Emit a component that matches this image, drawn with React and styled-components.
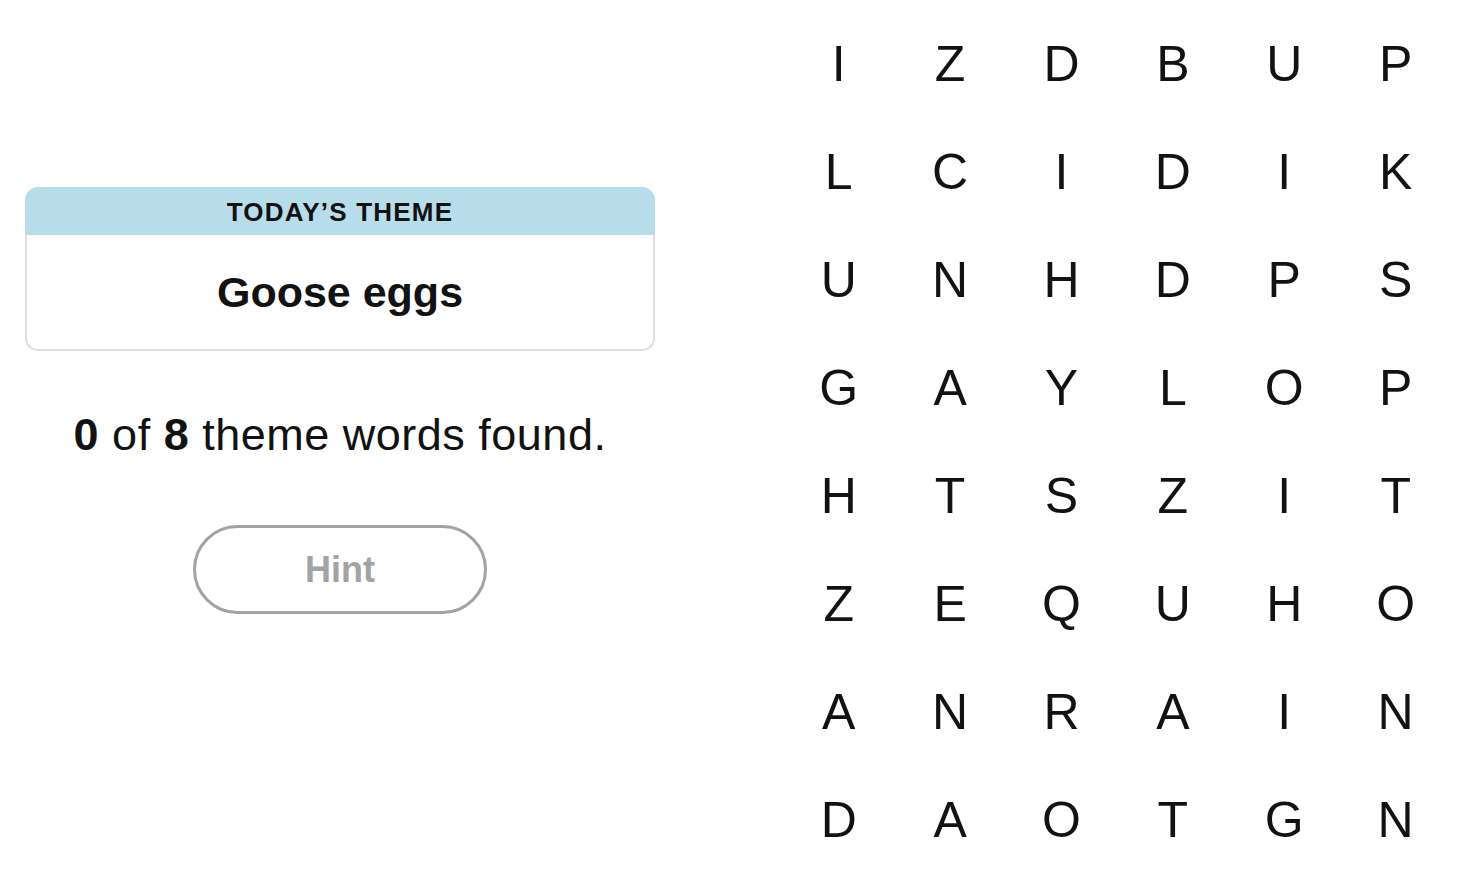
import React from "react";
import styled, { createGlobalStyle } from "styled-components";

const GlobalStyle = createGlobalStyle`
  html, body { margin: 0; padding: 0; background: #ffffff; }
  body { font-family: "Liberation Sans", Arial, sans-serif; color: #121212; }
`;

const Page = styled.div`
  display: flex;
  flex-direction: row;
  align-items: flex-start;
  width: 1474px;
  height: 878px;
  overflow: hidden;
`;

const LeftPanel = styled.section`
  width: 630px;
  margin-left: 25px;
  padding-top: 187px;
  display: flex;
  flex-direction: column;
  align-items: center;
`;

const ThemeCard = styled.div`
  width: 100%;
  display: flex;
  flex-direction: column;
`;

const ThemeHeader = styled.div`
  height: 48px;
  background: #b7ddeb;
  border-radius: 13px 13px 0 0;
  display: flex;
  align-items: center;
  justify-content: center;
  padding-top: 2px;
  box-sizing: border-box;
  font-size: 26px;
  font-weight: 700;
  letter-spacing: 1.2px;
  color: #121212;
  text-transform: uppercase;
`;

const ThemeBody = styled.div`
  height: 114px;
  border: 2px solid #dedede;
  border-top: none;
  border-radius: 0 0 13px 13px;
  display: flex;
  align-items: center;
  justify-content: center;
  font-size: 43px;
  font-weight: 700;
  color: #121212;
`;

const Progress = styled.p`
  margin: 58px 0 0;
  font-size: 45px;
  line-height: 52px;
  letter-spacing: 0.5px;
  color: #121212;
  text-align: center;
  b { font-weight: 700; }
`;

const HintButton = styled.button`
  margin-top: 64px;
  width: 294px;
  height: 89px;
  border: 3px solid #a3a3a3;
  border-radius: 45px;
  background: #ffffff;
  color: #a3a3a3;
  font-family: "Liberation Sans", Arial, sans-serif;
  font-size: 36px;
  font-weight: 700;
  display: flex;
  align-items: center;
  justify-content: center;
  padding: 0;
`;

const Board = styled.div`
  margin-left: 128px;
  padding-top: 10px;
  display: grid;
  grid-template-columns: repeat(6, 111.4px);
  grid-template-rows: repeat(8, 108px);
`;

const Cell = styled.div`
  display: flex;
  align-items: center;
  justify-content: center;
  font-size: 50px;
  font-weight: 400;
  color: #121212;
  line-height: 1;
`;

const rows = [
  "IZDBUP",
  "LCIDIK",
  "UNHDPS",
  "GAYLOP",
  "HTSZIT",
  "ZEQUHO",
  "ANRAIN",
  "DAOTGN",
];

export default function App() {
  return (
    <>
      <GlobalStyle />
      <Page>
        <LeftPanel>
          <ThemeCard>
            <ThemeHeader>Today’s Theme</ThemeHeader>
            <ThemeBody>Goose eggs</ThemeBody>
          </ThemeCard>
          <Progress>
            <b>0</b> of <b>8</b> theme words found.
          </Progress>
          <HintButton>Hint</HintButton>
        </LeftPanel>
        <Board>
          {rows.flatMap((row, r) =>
            row.split("").map((ch, c) => <Cell key={`${r}-${c}`}>{ch}</Cell>)
          )}
        </Board>
      </Page>
    </>
  );
}
